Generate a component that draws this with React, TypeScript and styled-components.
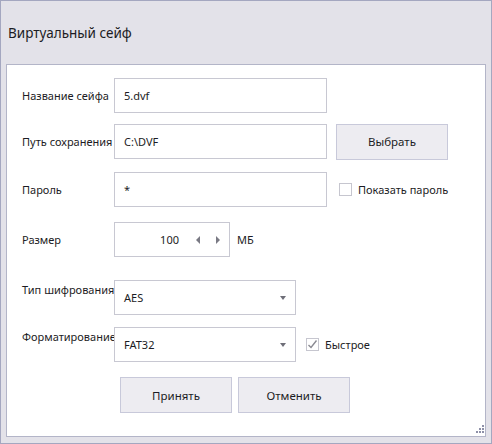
import styled, { createGlobalStyle } from "styled-components";

const Global = createGlobalStyle`
  html, body {
    margin: 0;
    padding: 0;
    background: #e3e2e9;
  }
  * {
    box-sizing: border-box;
  }
`;

const Window = styled.div`
  width: 492px;
  height: 444px;
  border: 1px solid #a4a7c0;
  background: #e3e2e9;
  padding: 0 5px 6px 5px;
  display: flex;
  flex-direction: column;
  font-family: "Noto Sans", "Open Sans", sans-serif;
  color: #1c1c24;
`;

const Header = styled.div`
  height: 63px;
  display: flex;
  align-items: center;
  padding-left: 2px;
  font-size: 13.5px;
`;

const Panel = styled.div`
  position: relative;
  flex: 1;
  background: #fff;
  border: 1px solid #b3b5c8;
  padding: 13px 0 0 15px;
  display: flex;
  flex-direction: column;
`;

const Row = styled.div<{ $top?: number }>`
  display: flex;
  align-items: center;
  height: 35px;
  margin-top: ${(p) => p.$top ?? 0}px;
  font-size: 11px;
`;

const Label = styled.div<{ $shift?: number }>`
  width: 92px;
  flex-shrink: 0;
  white-space: nowrap;
  align-self: ${(p) => (p.$shift !== undefined ? "flex-start" : "center")};
  margin-top: ${(p) => p.$shift ?? 0}px;
`;

const Field = styled.div<{ $w: number }>`
  width: ${(p) => p.$w}px;
  height: 35px;
  border: 1px solid #c8c8d2;
  background: #fff;
  display: flex;
  align-items: center;
  padding: 0 9px;
  flex-shrink: 0;
`;

const Value = styled.span<{ $right?: boolean }>`
  flex: 1;
  text-align: ${(p) => (p.$right ? "right" : "left")};
`;

const SpinArrows = styled.div`
  display: flex;
  gap: 16px;
  margin-left: 17px;
`;

const Tri = styled.span<{ $dir: "left" | "right" | "down" }>`
  width: 0;
  height: 0;
  border-style: solid;
  ${(p) =>
    p.$dir === "left"
      ? "border-width: 4px 4px 4px 0; border-color: transparent #7a7a84 transparent transparent;"
      : p.$dir === "right"
      ? "border-width: 4px 0 4px 4px; border-color: transparent transparent transparent #7a7a84;"
      : "border-width: 4px 3.5px 0 3.5px; border-color: #6e6e78 transparent transparent transparent;"}
`;

const Button = styled.button<{ $ml?: number }>`
  width: 112px;
  height: 36px;
  margin-left: ${(p) => p.$ml ?? 0}px;
  border: 1px solid #c8c9da;
  background: #edecf1;
  font-family: inherit;
  font-size: 11.5px;
  color: #1c1c24;
  padding: 0;
  flex-shrink: 0;
`;

const Check = styled.span<{ $ml: number }>`
  width: 13px;
  height: 13px;
  border: 1px solid #c6c6cf;
  background: #fff;
  margin-left: ${(p) => p.$ml}px;
  display: flex;
  align-items: center;
  justify-content: center;
  flex-shrink: 0;
`;

const CheckText = styled.span`
  margin-left: 6px;
  white-space: nowrap;
`;

const Unit = styled.span`
  margin-left: 7px;
`;

const Footer = styled.div`
  display: flex;
  gap: 6px;
  margin-top: 15px;
  padding-left: 98px;
`;

const Grip = styled.svg`
  position: absolute;
  right: 1px;
  bottom: 1px;
`;

export default function App() {
  return (
    <>
      <Global />
      <Window>
        <Header>Виртуальный сейф</Header>
        <Panel>
          <Row>
            <Label>Название сейфа</Label>
            <Field $w={213}>
              <Value>5.dvf</Value>
            </Field>
          </Row>
          <Row $top={11}>
            <Label>Путь сохранения</Label>
            <Field $w={213}>
              <Value>C:\DVF</Value>
            </Field>
            <Button $ml={9}>Выбрать</Button>
          </Row>
          <Row $top={13}>
            <Label>Пароль</Label>
            <Field $w={213}>
              <Value>*</Value>
            </Field>
            <Check $ml={12} />
            <CheckText>Показать пароль</CheckText>
          </Row>
          <Row $top={15}>
            <Label>Размер</Label>
            <Field $w={116}>
              <Value $right>100</Value>
              <SpinArrows>
                <Tri $dir="left" />
                <Tri $dir="right" />
              </SpinArrows>
            </Field>
            <Unit>МБ</Unit>
          </Row>
          <Row $top={23}>
            <Label $shift={2}>Тип шифрования</Label>
            <Field $w={182}>
              <Value>AES</Value>
              <Tri $dir="down" />
            </Field>
          </Row>
          <Row $top={12}>
            <Label $shift={2}>Форматирование</Label>
            <Field $w={182}>
              <Value>FAT32</Value>
              <Tri $dir="down" />
            </Field>
            <Check $ml={10}>
              <svg width="11" height="11" viewBox="0 0 11 11">
                <path d="M1.5 6 L4 8.5 L9.5 1.5" fill="none" stroke="#8a8a92" strokeWidth="1.4" />
              </svg>
            </Check>
            <CheckText>Быстрое</CheckText>
          </Row>
          <Footer>
            <Button>Принять</Button>
            <Button>Отменить</Button>
          </Footer>
          <Grip width="10" height="10" viewBox="0 0 10 10">
            {[
              [8, 0],
              [8, 3],
              [5, 3],
              [8, 6],
              [5, 6],
              [2, 6],
            ].map(([x, y]) => (
              <rect key={`${x}-${y}`} x={x} y={y} width="2" height="2" fill="#8e90a8" />
            ))}
          </Grip>
        </Panel>
      </Window>
    </>
  );
}
